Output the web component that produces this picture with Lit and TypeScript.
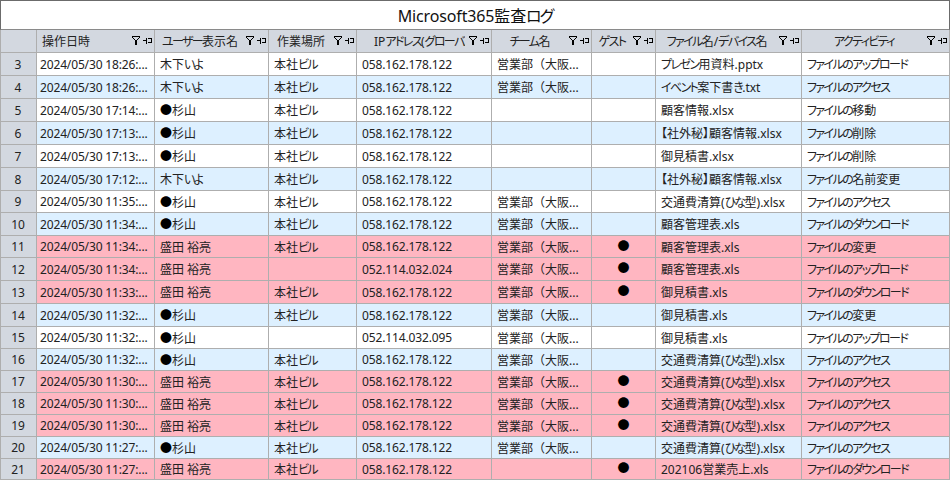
import { LitElement, html, css, nothing } from "lit";
import { customElement } from "lit/decorators.js";

const K = "木下いよ", S = "●杉山", M = "盛田 裕亮", H = "本社ビル";
const A = "058.162.178.122", T = "営業部（大阪...";
const UP = "ファイルのアップロード", AC = "ファイルのアクセス", DL = "ファイルのダウンロード", CH = "ファイルの変更", DEL = "ファイルの削除";
const TR = "交通費清算(ひな型).xlsx";

type Row = [number, number, string, string, string, string, string, boolean, string, string, string];
const rows: Row[] = [
  [3, 23, "18:26", K, H, A, T, false, "プレゼン用資料.pptx", UP, "w"],
  [4, 23, "18:26", K, H, A, T, false, "イベント案下書き.txt", AC, "b"],
  [5, 23, "17:14", S, H, A, "", false, "顧客情報.xlsx", "ファイルの移動", "w"],
  [6, 23, "17:13", S, H, A, "", false, "【社外秘】顧客情報.xlsx", DEL, "b"],
  [7, 23, "17:13", S, H, A, "", false, "御見積書.xlsx", DEL, "w"],
  [8, 23, "17:12", K, H, A, "", false, "【社外秘】顧客情報.xlsx", "ファイルの名前変更", "b"],
  [9, 22, "11:35", S, H, A, T, false, TR, AC, "w"],
  [10, 23, "11:34", S, H, A, T, false, "顧客管理表.xls", DL, "b"],
  [11, 22, "11:34", M, H, A, T, true, "顧客管理表.xls", CH, "p"],
  [12, 23, "11:34", M, "", "052.114.032.024", T, true, "顧客管理表.xls", UP, "p"],
  [13, 23, "11:33", M, H, A, T, true, "御見積書.xls", DL, "p"],
  [14, 23, "11:32", S, H, A, T, false, "御見積書.xls", CH, "b"],
  [15, 22, "11:32", S, "", "052.114.032.095", T, false, "御見積書.xls", UP, "w"],
  [16, 22, "11:32", S, H, A, T, false, TR, AC, "b"],
  [17, 22, "11:30", M, H, A, T, true, TR, AC, "p"],
  [18, 22, "11:30", M, H, A, T, true, TR, AC, "p"],
  [19, 22, "11:30", M, H, A, T, true, TR, AC, "p"],
  [20, 22, "11:27", S, H, A, T, false, TR, AC, "b"],
  [21, 21, "11:27", M, H, A, "", true, "202106営業売上.xls", DL, "p"],
];
const heads = ["操作日時", "ユーザー表示名", "作業場所", "IPアドレス(グローバル)", "チーム名", "ゲスト", "ファイル名/デバイス名", "アクティビティ"];

/* The reference face has narrow kana: tighten kana runs, keep kanji at full width. */
const tx = (s: string) =>
  s.split(/([\u3040-\u30ff]+|（)/).map((p, i) =>
    i % 2 === 0 ? p : p === "（" ? html`<span class="fw">${p}</span>` : html`<span class="kana">${p}</span>`);

const icons = html`<svg class="icons" width="22" height="9" viewBox="0 0 22 9" fill="none" stroke="#000" stroke-width="1" shape-rendering="crispEdges">
  <path d="M1.5 0.5H8.5V1.5L5.5 4.5V8.5H4.5V4.5L1.5 1.5Z"/>
  <path d="M12 4.5H15M15.5 1.5V7.5M16.5 2.5H20.5V6.5H16.5"/>
</svg>`;

@customElement("app-root")
export class AppRoot extends LitElement {
  static styles = css`
    :host { display: block; width: 950px; height: 480px; overflow: hidden; background: #fff; font-family: "Noto Sans", "Noto Sans CJK JP", sans-serif; font-size: 12px; color: #222; }
    .title { box-sizing: border-box; height: 30px; border: 1px solid #6b6b6b; border-bottom-color: #8a8a8a; display: flex; align-items: center; justify-content: center; font-size: 16px; word-spacing: -4px; letter-spacing: -0.15px; font-feature-settings: "palt"; color: #111; background: #fff; }
    .row { display: grid; grid-template-columns: 36px 118px 114px 88px 135px 100px 64px 146px 148px; border-left: 1px solid #aeaeae; border-bottom: 1px solid #aeaeae; box-sizing: border-box; font-feature-settings: "palt"; }
    .row > div { box-sizing: border-box; border-right: 1px solid #aeaeae; min-width: 0; display: flex; align-items: center; white-space: pre; overflow: hidden; padding-left: 5px; }
    .row > .num { background: #d3d8e0; justify-content: center; padding: 0 1px 0 0; }
    .head { height: 23px; background: #d3d8e0; }
    .row.head > div { padding: 0 1px 0 0; }
    .label { flex: 1; min-width: 0; overflow: hidden; text-align: center; white-space: pre; }
    .label.first { text-align: left; padding-left: 5px; }
    .label.ip { text-align: left; padding-left: 17px; margin-right: 3px; }
    .icons { flex: none; margin-top: -1px; }
    .kana { letter-spacing: -1.6px; }
    .title .kana { letter-spacing: -1.9px; }
    .fw { font-feature-settings: normal; }
    .w > div { background: #fff; }
    .b > div { background: #ddf0ff; }
    .p > div { background: #ffb6c1; }
    .row > .date { padding-left: 3px; letter-spacing: -0.15px; }
    .row > .ip { letter-spacing: -0.13px; }
    .row > .guest { justify-content: center; padding: 0 0 2px 0; color: #000; }
    .bullet { color: #000; }
  `;
  render() {
    return html`
      <div class="title">Microsoft365 ${tx("監査ログ")}</div>
      <div class="row head">
        <div class="num"></div>
        ${heads.map((h, i) => html`<div><span class="label ${i === 0 ? "first" : i === 3 ? "ip" : ""}">${tx(h)}</span>${icons}</div>`)}
      </div>
      ${rows.map(r => html`
        <div class="row ${r[10]}" style="height:${r[1]}px">
          <div class="num">${r[0]}</div>
          <div class="date">2024/05/30 ${r[2]}:...</div>
          <div>${r[3].startsWith("●") ? html`<span class="bullet">●</span>${r[3].slice(1)}` : tx(r[3])}</div>
          <div>${tx(r[4])}</div>
          <div class="ip">${r[5]}</div>
          <div>${tx(r[6])}</div>
          <div class="guest">${r[7] ? "●" : nothing}</div>
          <div>${tx(r[8])}</div>
          <div>${tx(r[9])}</div>
        </div>`)}
    `;
  }
}
